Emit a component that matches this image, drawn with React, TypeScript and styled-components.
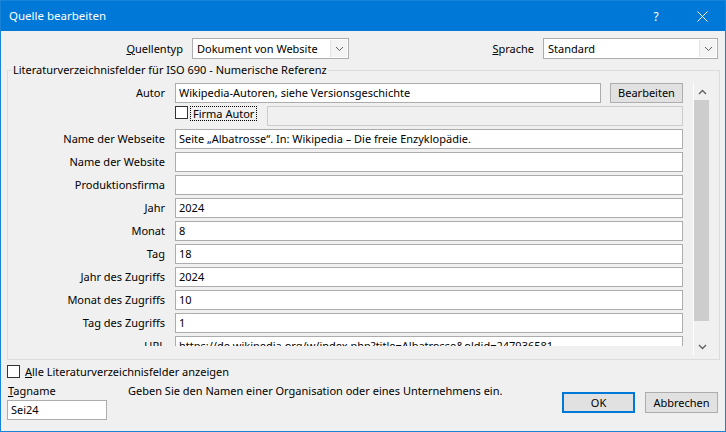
import React from 'react';
import styled, { createGlobalStyle } from 'styled-components';

const Global = createGlobalStyle`
  html, body { margin: 0; padding: 0; background: #f0f0f0; }
  body { font-family: "Noto Sans", "Open Sans", sans-serif; font-size: 11px; color: #000; }
  * { box-sizing: border-box; }
`;

const Window = styled.div`
  width: 726px;
  height: 432px;
  border: 1px solid #1883d7;
  background: #f0f0f0;
  display: flex;
  flex-direction: column;
  overflow: hidden;
`;

const TitleBar = styled.div`
  height: 30px;
  flex-shrink: 0;
  background: #0078d7;
  color: #fff;
  display: flex;
  align-items: center;
  padding-left: 8px;
  font-size: 11.5px;
`;

const TitleText = styled.div`
  flex: 1;
  line-height: 16px;
`;

const TitleButton = styled.div`
  width: 46px;
  height: 30px;
  display: flex;
  align-items: center;
  justify-content: center;
  font-size: 12px;
`;

const Body = styled.div`
  flex: 1;
  display: flex;
  flex-direction: column;
`;

const TopRow = styled.div`
  margin-top: 7px;
  height: 21px;
  display: flex;
  align-items: center;
`;

const TopLabel = styled.div<{ $w: number }>`
  width: ${(p) => p.$w}px;
  text-align: right;
  padding-right: 9px;
  line-height: 16px;
`;

const U = styled.span`
  text-decoration: underline;
`;

const Combo = styled.div<{ $w: number }>`
  width: ${(p) => p.$w}px;
  height: 21px;
  border: 1px solid #adadad;
  background: #fff;
  display: flex;
  align-items: stretch;
`;

const ComboText = styled.div`
  flex: 1;
  padding-left: 4px;
  line-height: 19px;
  white-space: nowrap;
`;

const ComboButton = styled.div`
  width: 17px;
  display: flex;
  align-items: center;
  justify-content: center;
  background: #f4f4f4;
  border-left: 1px solid #e3e3e3;
  margin: 1px;
`;

const Group = styled.div`
  position: relative;
  margin: 11px 5px 0 6px;
  border: 1px solid #dcdcdc;
  padding: 12px 8px 4px 0;
  display: flex;
  align-items: flex-start;
`;

const Legend = styled.div`
  position: absolute;
  left: 4px;
  top: -9px;
  padding: 0 1px;
  line-height: 16px;
  background: #f0f0f0;
  white-space: nowrap;
`;

const Viewport = styled.div`
  width: 685px;
  height: 263px;
  overflow: hidden;
  padding-right: 10px;
`;

const FieldGrid = styled.div`
  display: grid;
  grid-template-columns: 157px 508px;
  grid-auto-rows: 20px;
  column-gap: 10px;
  row-gap: 3px;
`;

const FieldLabel = styled.div`
  text-align: right;
  line-height: 20px;
  white-space: nowrap;
`;

const FieldCell = styled.div`
  display: flex;
  align-items: stretch;
  gap: 9px;
`;

const TextBox = styled.div<{ $disabled?: boolean }>`
  flex: 1;
  height: 20px;
  border: 1px solid #acacac;
  background: ${(p) => (p.$disabled ? '#f0f0f0' : '#fff')};
  border-color: ${(p) => (p.$disabled ? '#cccccc' : '#acacac')};
  padding-left: 3px;
  line-height: 18px;
  white-space: nowrap;
  overflow: hidden;
`;

const Button = styled.div<{ $w: number; $h: number; $default?: boolean }>`
  width: ${(p) => p.$w}px;
  height: ${(p) => p.$h}px;
  flex-shrink: 0;
  background: #e1e1e1;
  border: 1px solid ${(p) => (p.$default ? '#0078d7' : '#adadad')};
  box-shadow: ${(p) => (p.$default ? 'inset 0 0 0 1px #0078d7' : 'none')};
  display: flex;
  align-items: center;
  justify-content: center;
  line-height: 16px;
`;

const CheckRow = styled.div`
  display: flex;
  align-items: flex-start;
`;

const CheckBox = styled.div`
  width: 13px;
  height: 13px;
  border: 1px solid #333;
  background: #fff;
  flex-shrink: 0;
`;

const FocusLabel = styled.div`
  margin-left: 2px;
  padding: 0 2px;
  height: 15px;
  line-height: 14px;
  border: 1px dotted #000;
  white-space: nowrap;
`;

const DisabledWrap = styled.div`
  flex: 1;
  display: flex;
  margin-left: 10px;
`;

const ScrollBar = styled.div`
  width: 17px;
  height: 272px;
  border-left: 1px solid #fff;
  display: flex;
  flex-direction: column;
`;

const ArrowBtn = styled.div`
  height: 17px;
  display: flex;
  align-items: center;
  justify-content: center;
`;

const Thumb = styled.div`
  height: 221px;
  margin: 0 1px 0 0;
  background: #cdcdcd;
`;

const Track = styled.div`
  flex: 1;
`;

const Bottom = styled.div`
  padding: 5px 7px 0 6px;
  display: flex;
  flex-direction: column;
`;

const AllRow = styled.div`
  height: 13px;
  display: flex;
  align-items: center;
  gap: 5px;
  white-space: nowrap;
`;

const BottomRow = styled.div`
  margin-top: 5px;
  display: flex;
  align-items: flex-start;
`;

const TagCol = styled.div`
  width: 121px;
  display: flex;
  flex-direction: column;
  gap: 1px;
`;

const TagLabel = styled.div`
  line-height: 16px;
  padding-left: 1px;
`;

const TagInput = styled.div`
  width: 100px;
  height: 20px;
  border: 1px solid #acacac;
  background: #fff;
  padding-left: 3px;
  line-height: 18px;
`;

const Hint = styled.div`
  flex: 1;
  line-height: 16px;
  white-space: nowrap;
`;

const Buttons = styled.div`
  margin-top: 9px;
  display: flex;
  gap: 10px;
`;

const Chevron = ({ up }: { up?: boolean }) => (
  <svg width="9" height="6" viewBox="0 0 9 6">
    <polyline
      points={up ? '1,5 4.5,1.5 8,5' : '1,1 4.5,4.5 8,1'}
      fill="none"
      stroke="#606060"
      strokeWidth="1.4"
    />
  </svg>
);

const ComboChevron = () => (
  <svg width="9" height="6" viewBox="0 0 9 6">
    <polyline points="1,1 4.5,4.5 8,1" fill="none" stroke="#606060" strokeWidth="1" />
  </svg>
);

const rows: [string, string][] = [
  ['Name der Webseite', 'Seite \u201eAlbatrosse\u201c. In: Wikipedia \u2013 Die freie Enzyklop\u00e4die.'],
  ['Name der Website', ''],
  ['Produktionsfirma', ''],
  ['Jahr', '2024'],
  ['Monat', '8'],
  ['Tag', '18'],
  ['Jahr des Zugriffs', '2024'],
  ['Monat des Zugriffs', '10'],
  ['Tag des Zugriffs', '1'],
  ['URL', 'https://de.wikipedia.org/w/index.php?title=Albatrosse&oldid=247936581'],
];

export default function App() {
  return (
    <>
      <Global />
      <Window>
        <TitleBar>
          <TitleText>Quelle bearbeiten</TitleText>
          <TitleButton>?</TitleButton>
          <TitleButton>
            <svg width="11" height="11" viewBox="0 0 11 11">
              <path d="M0.5 0.5 L10.5 10.5 M10.5 0.5 L0.5 10.5" stroke="#fff" strokeWidth="1" />
            </svg>
          </TitleButton>
        </TitleBar>
        <Body>
          <TopRow>
            <TopLabel $w={191}>
              <U>Q</U>uellentyp
            </TopLabel>
            <Combo $w={157}>
              <ComboText>Dokument von Website</ComboText>
              <ComboButton>
                <ComboChevron />
              </ComboButton>
            </Combo>
            <TopLabel $w={194}>
              <U>S</U>prache
            </TopLabel>
            <Combo $w={175}>
              <ComboText>Standard</ComboText>
              <ComboButton>
                <ComboChevron />
              </ComboButton>
            </Combo>
          </TopRow>
          <Group>
            <Legend>{'Literaturverzeichnisfelder f\u00fcr ISO 690 - Numerische Referenz'}</Legend>
            <Viewport>
              <FieldGrid>
                <FieldLabel>Autor</FieldLabel>
                <FieldCell>
                  <TextBox>Wikipedia-Autoren, siehe Versionsgeschichte</TextBox>
                  <Button $w={73} $h={20}>Bearbeiten</Button>
                </FieldCell>
                <div />
                <CheckRow>
                  <CheckBox />
                  <FocusLabel>Firma Autor</FocusLabel>
                  <DisabledWrap>
                    <TextBox $disabled />
                  </DisabledWrap>
                </CheckRow>
                {rows.map(([label, value]) => (
                  <React.Fragment key={label}>
                    <FieldLabel>{label}</FieldLabel>
                    <FieldCell>
                      <TextBox>{value}</TextBox>
                    </FieldCell>
                  </React.Fragment>
                ))}
              </FieldGrid>
            </Viewport>
            <ScrollBar>
              <ArrowBtn>
                <Chevron up />
              </ArrowBtn>
              <Thumb />
              <Track />
              <ArrowBtn>
                <Chevron />
              </ArrowBtn>
            </ScrollBar>
          </Group>
          <Bottom>
            <AllRow>
              <CheckBox />
              <span>
                <U>A</U>lle Literaturverzeichnisfelder anzeigen
              </span>
            </AllRow>
            <BottomRow>
              <TagCol>
                <TagLabel>
                  <U>T</U>agname
                </TagLabel>
                <TagInput>Sei24</TagInput>
              </TagCol>
              <Hint>Geben Sie den Namen einer Organisation oder eines Unternehmens ein.</Hint>
              <Buttons>
                <Button $w={73} $h={21} $default>OK</Button>
                <Button $w={73} $h={21}>Abbrechen</Button>
              </Buttons>
            </BottomRow>
          </Bottom>
        </Body>
      </Window>
    </>
  );
}
